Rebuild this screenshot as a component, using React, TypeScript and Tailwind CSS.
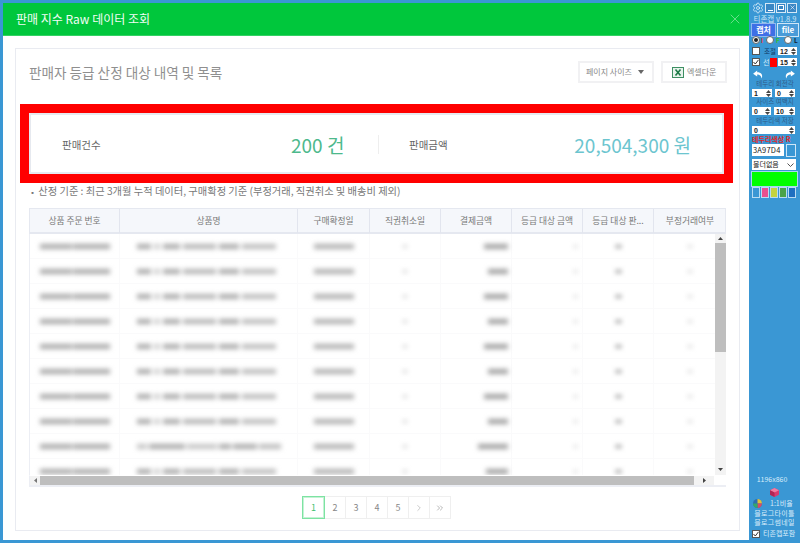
import React from "react";
import { Settings, X, ChevronRight, ChevronsRight } from "lucide-react";

const headers = ["상품 주문 번호", "상품명", "구매확정일", "직권취소일", "결제금액", "등급 대상 금액", "등급 대상 판...", "부정거래여부"];
const amounts = [24, 20, 24, 20, 24, 20, 24, 20, 30, 22];

function Tri({ up }: { up?: boolean }) {
  return (
    <svg width="5" height="3" viewBox="0 0 5 3" className="block">
      <path d={up ? "M2.5 0 5 3H0z" : "M0 0h5L2.5 3z"} fill="#444" />
    </svg>
  );
}

function Spin({ v, w }: { v: string; w: string }) {
  return (
    <div className={`flex h-[8px] items-center justify-between bg-white pl-[2px] pr-[1px] font-['Liberation_Sans',sans-serif] text-[7px] font-bold leading-none text-[#222] ${w}`}>
      <span>{v}</span>
      <span className="flex flex-col gap-[1px]">
        <Tri up />
        <Tri />
      </span>
    </div>
  );
}

function Check({ on }: { on?: boolean }) {
  return (
    <span className="flex h-[8px] w-[8px] shrink-0 items-center justify-center border border-[#555] bg-white">
      {on && (
        <svg width="6" height="6" viewBox="0 0 6 6">
          <path d="M.5 3 2.3 5 5.5 .8" fill="none" stroke="#333" strokeWidth="1" />
        </svg>
      )}
    </span>
  );
}

function Radio({ on }: { on?: boolean }) {
  return (
    <span className="flex h-[8px] w-[8px] shrink-0 items-center justify-center rounded-full border border-[#666] bg-white">
      {on && <span className="h-[4px] w-[4px] rounded-full bg-[#222]" />}
    </span>
  );
}

function Arrow({ flip }: { flip?: boolean }) {
  return (
    <svg width="12" height="9" viewBox="0 0 13 11" className={flip ? "-scale-x-100" : ""}>
      <path d="M5.5 0.5 0.5 4.5 5.5 8V5.6C8 5.4 10 6.5 11 10.5 12.8 6 10.5 2.8 5.5 2.8z" fill="#fff" />
    </svg>
  );
}

function Sidebar() {
  return (
    <aside className="flex h-[543px] w-[50px] shrink-0 flex-col items-stretch px-[1px] pt-[2px] text-[7px] leading-none text-[#d8ecfa]">
      <div className="flex h-[11px] items-center justify-between pl-[1px] pr-[2px]">
        <Settings size={12} strokeWidth={1.5} color="#e8f4fc" />
        <div className="flex gap-[1px]">
          <span className="flex h-[10px] w-[10px] items-end justify-center border border-[#d5e8f6] bg-[#3a87c4] pb-[1px]"><span className="h-[1px] w-[5px] bg-white" /></span>
          <span className="flex h-[10px] w-[10px] items-center justify-center border border-[#d5e8f6] bg-[#3a87c4]"><span className="h-[5px] w-[6px] border border-white" /></span>
          <span className="flex h-[10px] w-[10px] items-center justify-center border border-[#d5e8f6] bg-[#3a87c4]"><X size={7} strokeWidth={2} color="#fff" /></span>
        </div>
      </div>
      <div className="mt-[1px] h-[9px] whitespace-nowrap text-center text-[7.5px] leading-[9px] text-[#cbe5f7]">티존캡 v1.8.9</div>
      <div className="mt-[1px] flex h-[12px] justify-between px-[1px] text-[8px] font-bold">
        <span className="flex w-[23px] items-center justify-center bg-[#3f6fe6] text-white outline outline-1 outline-[#8fb8ef]">캡처</span>
        <span className="flex w-[20px] items-center justify-center bg-[#4a9bd8] text-white outline outline-1 outline-[#cfe6f7]">file</span>
      </div>
      <div className="flex h-[8px] items-center pl-[1px] text-[6.5px] font-bold">
        <Radio on />
        <span className="ml-[1px] w-[5px] text-[#e03030]">I</span>
        <Radio />
        <span className="ml-[2px] w-[8px] text-[#30c030]">F</span>
        <Radio />
        <span className="ml-[2px] text-[#123]">L</span>
      </div>
      <div className="mt-[2px] flex h-[10px] items-center pl-[1px]">
        <Check />
        <span className="ml-[4px] w-[14px] whitespace-nowrap text-[6.5px] text-[#123a66]">조절</span>
        <Spin v="12" w="w-[19px]" />
      </div>
      <div className="mt-[1px] flex h-[10px] items-center pl-[1px]">
        <Check on />
        <span className="ml-[3px] w-[7px] text-[#d8ecfa]">선</span>
        <span className="h-[9px] w-[7px] bg-[#ff0000]" />
        <span className="w-[1px]" />
        <Spin v="15" w="w-[19px]" />
      </div>
      <div className="mt-[3px] flex h-[9px] justify-between pl-[1px] pr-[3px]">
        <Arrow />
        <Arrow flip />
      </div>
      <div className="h-[9px] whitespace-nowrap text-center text-[6.5px] leading-[9px] text-[#2f5c88]">테두리 회전각</div>
      <div className="mt-[1px] flex gap-[3px] pl-[1px]">
        <Spin v="1" w="w-[20px]" />
        <Spin v="0" w="w-[20px]" />
      </div>
      <div className="h-[8px] whitespace-nowrap pt-[1px] text-center text-[6.5px] leading-[7px] text-[#2f5c88]">사이즈 여백지</div>
      <div className="mt-[2px] flex gap-[3px] pl-[1px]">
        <Spin v="0" w="w-[19px]" />
        <Spin v="10" w="w-[21px]" />
      </div>
      <div className="h-[9px] whitespace-nowrap pt-[1px] text-center text-[6.5px] leading-[8px] text-[#2f5c88]">테두리색 저장</div>
      <div className="mt-[2px] pl-[1px]">
        <Spin v="0" w="w-[43px]" />
      </div>
      <div className="h-[10px] whitespace-nowrap pl-[1px] text-[7px] font-bold leading-[10px] text-[#e02828]">테두리색상 R</div>
      <div className="flex h-[12px] items-center gap-[3px] pl-[1px]">
        <span className="flex h-[12px] w-[32px] items-center bg-white pl-[1px] text-[7.5px] tracking-[0.2px] text-[#222]">3A97D4</span>
        <span className="h-[11px] w-[8px] bg-[#3a97d4] outline outline-1 outline-[#cfe6f7]" />
      </div>
      <div className="ml-[1px] mt-[3px] flex h-[11px] w-[44px] items-center justify-between bg-white pl-[1px] pr-[2px] text-[7px] text-[#222]">
        <span className="whitespace-nowrap">볼더없음</span>
        <svg width="7" height="4" viewBox="0 0 7 4"><path d="M.5.5 3.5 3.5 6.5.5" fill="none" stroke="#555" /></svg>
      </div>
      <div className="ml-[1px] mt-[2px] h-[14px] w-[45px] shrink-0 bg-[#00ff00] outline outline-1 outline-[#a9d6f2]" />
      <div className="mt-[2px] flex gap-[3px] pl-[2px]">
        {["bg-[#3a97d4]", "bg-[#e8508f]", "bg-[#c5d33f]", "bg-[#4aa34a]", "bg-[#1e6fc0]"].map((c) => (
          <span key={c} className={`h-[9px] w-[6px] outline outline-1 outline-[#b9dcf3] ${c}`} />
        ))}
      </div>
      <div className="flex-1" />
      <div className="h-[9px] whitespace-nowrap pr-[6px] text-center text-[7px] leading-[9px] text-[#d8ecfa]">1196x860</div>
      <div className="mt-[4px] flex justify-center pr-[1px]">
        <svg width="9" height="9" viewBox="0 0 9 9">
          <path d="M4.5 0 9 2.2v4.6L4.5 9 0 6.8V2.2z" fill="#d93a6f" />
          <path d="M4.5 4.4 9 2.2 4.5 0 0 2.2z" fill="#f07da3" />
          <path d="M4.5 4.4V9L0 6.8V2.2z" fill="#b02555" />
        </svg>
      </div>
      <div className="mt-[1px] flex h-[10px] items-center pl-[2px]">
        <svg width="9" height="9" viewBox="0 0 9 9">
          <circle cx="4.5" cy="4.5" r="4.5" fill="#2d6fb0" />
          <path d="M4.5 0A4.5 4.5 0 0 1 9 4.5H4.5z" fill="#e0c23a" />
          <path d="M9 4.5A4.5 4.5 0 0 1 4.5 9V4.5z" fill="#d84a6a" />
          <path d="M0 4.5A4.5 4.5 0 0 0 4.5 9V4.5z" fill="#35a86a" />
        </svg>
        <span className="ml-[8px] whitespace-nowrap text-[#d8ecfa]">1:1비율</span>
      </div>
      <div className="mt-[1px] h-[9px] whitespace-nowrap pr-[1px] text-center text-[7px] leading-[9px] tracking-[0.3px] text-[#d8ecfa]">블로그타이틀</div>
      <div className="h-[9px] whitespace-nowrap pr-[1px] text-center text-[7px] leading-[9px] tracking-[0.3px] text-[#d8ecfa]">블로그썸네일</div>
      <div className="mb-[5px] mt-[2px] flex h-[9px] items-center pl-[1px]">
        <Check on />
        <span className="ml-[3px] whitespace-nowrap text-[7px] text-[#d8ecfa]">티존캡포함</span>
      </div>
    </aside>
  );
}

function Bar({ w, c = "bg-[#a9a9a9]" }: { w: number; c?: string }) {
  return <span className={`block h-[5px] ${c}`} style={{ width: w }} />;
}

const cellBorder = "border-r border-[#fafafb]";

function Row({ i }: { i: number }) {
  const odd = i === 8;
  return (
    <div className="grid h-[25px] w-[697px] shrink-0 grid-cols-[90px_178px_72px_71px_71px_71px_71px_72px] items-stretch border-b border-[#fafafb]">
      <div className={`flex items-center justify-center ${cellBorder}`}>
        <div className="flex gap-[1px] blur-[2.5px]">
          <Bar w={32} />
          <Bar w={37} />
        </div>
      </div>
      <div className={`flex items-center pl-[17px] ${cellBorder}`}>
        {odd ? (
          <div className="flex gap-[2px] blur-[2.5px]">
            <Bar w={10} c="bg-[#c4c4c4]" />
            <Bar w={36} />
            <Bar w={30} c="bg-[#c4c4c4]" />
            <Bar w={12} />
            <Bar w={24} />
            <Bar w={22} c="bg-[#bbbbbb]" />
          </div>
        ) : (
          <div className="flex gap-[3px] blur-[2.5px]">
            <Bar w={14} />
            <Bar w={6} c="bg-[#cccccc]" />
            <Bar w={17} />
            <Bar w={33} c="bg-[#b4b4b4]" />
            <Bar w={20} />
            <Bar w={34} c="bg-[#bbbbbb]" />
          </div>
        )}
      </div>
      <div className={`flex items-center justify-center ${cellBorder}`}>
        <div className="blur-[2.5px]"><Bar w={40} c="bg-[#b0b0b0]" /></div>
      </div>
      <div className={`flex items-center justify-center ${cellBorder}`}>
        <div className="blur-[2px]"><Bar w={6} c="bg-[#ececec]" /></div>
      </div>
      <div className={`flex items-center justify-end pr-[3px] ${cellBorder}`}>
        <div className="blur-[2.5px]"><Bar w={amounts[i]} c="bg-[#a0a0a0]" /></div>
      </div>
      <div className={`flex items-center justify-end pr-[4px] ${cellBorder}`}>
        <div className="blur-[2px]"><Bar w={5} c="bg-[#eeeeee]" /></div>
      </div>
      <div className={`flex items-center justify-center ${cellBorder}`}>
        <div className="blur-[2px]"><Bar w={7} c="bg-[#c9c9c9]" /></div>
      </div>
      <div className="flex items-center justify-center">
        <div className="blur-[2px]"><Bar w={6} c="bg-[#eeeeee]" /></div>
      </div>
    </div>
  );
}

export default function App() {
  return (
    <div className="flex h-[543px] w-[800px] overflow-hidden bg-[#3a97d4] font-['Noto_Sans_CJK_KR','Noto_Sans',sans-serif]">
      <div className="w-[750px] shrink-0 pb-[3px] pl-[3px] pr-[1px] pt-[3px]">
        <div className="flex h-[537px] w-[746px] flex-col bg-white">
          <header className="flex h-[33px] shrink-0 items-center justify-between border-b border-[#33d163] bg-[#00c73c] pl-[13px] pr-[6px]">
            <h1 className="text-[12px] font-normal text-[#f2fdf5]">판매 지수 Raw 데이터 조회</h1>
            <X size={16} strokeWidth={0.8} color="#c5f0d2" />
          </header>
          <div className="ml-[12px] mt-[12px] flex h-[483px] w-[725px] flex-col border border-[#e9ebf1]">
            <div className="flex h-[55px] shrink-0 items-center justify-between pb-[9px] pl-[13px] pr-[12px]">
              <h2 className="text-[13.6px] font-normal text-[#8f8f8f]">판매자 등급 산정 대상 내역 및 목록</h2>
              <div className="flex gap-[7px]">
                <div className="flex h-[22px] w-[76px] items-center justify-between border-2 border-[#f1f1f3] pl-[6px] pr-[8px] text-[8px] text-[#8a8a8a]">
                  <span className="whitespace-nowrap">페이지 사이즈</span>
                  <span className="h-0 w-0 border-x-[3.5px] border-t-[4px] border-x-transparent border-t-[#666]" />
                </div>
                <div className="flex h-[22px] w-[66px] items-center gap-[3px] border-2 border-[#f1f1f3] pl-[9px] text-[8px] text-[#8a8a8a]">
                  <svg width="12" height="11" viewBox="0 0 12 11">
                    <rect x=".5" y=".5" width="11" height="10" fill="#e8f3ec" stroke="#3d8f62" />
                    <path d="M3.5 2.5 8.5 8.5M8.5 2.5 3.5 8.5" stroke="#1c7a45" strokeWidth="1.6" />
                  </svg>
                  <span className="whitespace-nowrap">엑셀다운</span>
                </div>
              </div>
            </div>
            <section className="ml-[4px] flex h-[79px] w-[713px] shrink-0 items-center border-[9px] border-[#ff0000]">
              <div className="flex h-full w-full items-center border-2 border-[#e6e9ef] bg-white pt-[2px]">
                <span className="ml-[31px] w-[229px] text-[10.5px] text-[#666]">판매건수</span>
                <span className="w-[54px] whitespace-nowrap text-[19px] leading-none text-[#4db98c]">200 건</span>
                <span className="ml-[33px] h-[19px] w-[1px] bg-[#eeeeee]" />
                <span className="ml-[30px] text-[10.5px] text-[#666]">판매금액</span>
                <span className="ml-auto mr-[31px] whitespace-nowrap text-[19px] leading-none text-[#6cc5cf]">20,504,300 원</span>
              </div>
            </section>
            <p className="ml-[13px] mt-[1px] h-[20px] whitespace-nowrap text-[10.25px] leading-[14px] text-[#777]"><span className="text-[7px]">▪</span> 산정 기준 : 최근 3개월 누적 데이터, 구매확정 기준 (부정거래, 직권취소 및 배송비 제외)</p>
            <div className="ml-[13px] mt-[4px] flex h-[279px] w-[697px] shrink-0 flex-col border-b-2 border-[#eceef4]">
              <div className="grid h-[26px] shrink-0 grid-cols-[90px_178px_72px_71px_71px_71px_71px_72px] border border-b-2 border-[#e5e8f0] bg-[#f5f7fb] text-center text-[8.75px] leading-[24px] text-[#777]">
                {headers.map((h, i) => (
                  <div key={h} className={i < 7 ? "whitespace-nowrap border-r border-[#e2e5ee]" : "whitespace-nowrap"}>{h}</div>
                ))}
              </div>
              <div className="flex h-[241px] shrink-0 border-l border-[#eceef4]">
                <div className="flex w-[685px] flex-col overflow-hidden">
                  {amounts.map((_, i) => (
                    <Row key={i} i={i} />
                  ))}
                </div>
                <div className="flex w-[11px] flex-col items-stretch bg-[#f3f3f3]">
                  <div className="flex h-[9px] items-center justify-center"><Tri up /></div>
                  <div className="h-[109px] bg-[#bebebe]" />
                  <div className="flex-1" />
                  <div className="flex h-[11px] items-center justify-center"><Tri /></div>
                </div>
              </div>
              <div className="flex h-[10px] shrink-0 border-l border-t border-[#eceef4] border-t-white bg-[#f3f3f3]">
                <div className="flex w-[10px] items-center justify-center">
                  <svg width="3" height="5" viewBox="0 0 3 5"><path d="M3 0v5L0 2.5z" fill="#777" /></svg>
                </div>
                <div className="w-[654px] bg-[#bebebe]" />
                <div className="flex w-[20px] items-center justify-center">
                  <svg width="3" height="5" viewBox="0 0 3 5"><path d="M0 0v5l3-2.5z" fill="#444" /></svg>
                </div>
                <div className="flex-1 bg-white" />
              </div>
            </div>
            <nav className="ml-[286px] mt-[9px] flex h-[23px] text-[9px] text-[#888]">
              <span className="flex w-[23px] items-center justify-center border border-[#7de3a2] text-[#3fbf6f] outline outline-1 -outline-offset-2 outline-[#c5f2d5]">1</span>
              {["2", "3", "4", "5"].map((n) => (
                <span key={n} className="flex w-[21px] items-center justify-center border-y border-r border-[#efefef]">{n}</span>
              ))}
              <span className="flex w-[21px] items-center justify-center border-y border-r border-[#efefef] text-[#aaa]"><ChevronRight size={10} strokeWidth={1.5} /></span>
              <span className="flex w-[21px] items-center justify-center border-y border-r border-[#efefef] text-[#aaa]"><ChevronsRight size={10} strokeWidth={2} /></span>
            </nav>
          </div>
        </div>
      </div>
      <Sidebar />
    </div>
  );
}
